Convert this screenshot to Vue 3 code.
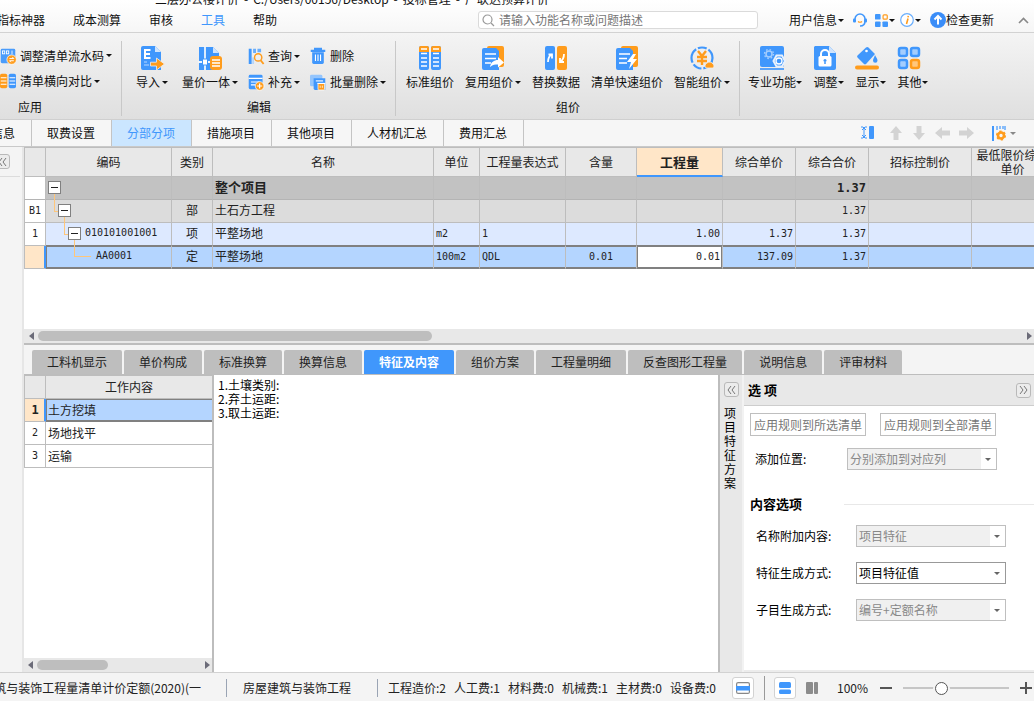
<script setup>
import { ref } from 'vue'

const B = '#4097fc'
const O = '#ff9c1c'

const icons = {
  serial: `<rect x="1" y="1" width="20" height="20" rx="2" fill="#4a9cfb"/><g fill="none" stroke="#fff" stroke-width="1.2"><rect x="3.5" y="4" width="3" height="4"/><rect x="9" y="4" width="3" height="4"/><path d="M16.500 3.500v5"/></g><circle cx="16" cy="16" r="6.500" fill="${O}" stroke="#fff"/><path d="M13 14.500h6l-2-2M19 17.500h-6l2 2" fill="none" stroke="#fff" stroke-width="1.300"/>`,
  compare: `<rect x="0" y="1" width="10" height="20" rx="2.500" fill="${O}"/><rect x="12" y="1" width="10" height="20" rx="2.500" fill="${B}"/><path d="M1 6.500h8M1 11h8M1 15.500h8M13 6.500h8M13 11h8M13 15.500h8" stroke="#fff" stroke-width="1.500"/>`,
  import: `<path d="M3 0h12l6 6v18H3a2 2 0 0 1-2-2V2a2 2 0 0 1 2-2z" fill="${B}"/><path d="M15 0l6 6h-6z" fill="#cfe4fd"/><path d="M10.500 4H5v8h5.500M5 8h5" fill="none" stroke="#fff" stroke-width="2"/><path d="M4 16h3M4 19h5" stroke="#8fc2ff" stroke-width="1.500"/><path d="M10.500 16.200h6v-4.200l8 6-8 6v-4h-6z" fill="${O}" stroke="#f0f0f0" stroke-width=".8"/>`,
  unify: `<path d="M1 1h14l6 6v17H1z" fill="${B}"/><path d="M15 1l6 6h-6z" fill="#cfe4fd"/><path d="M7 0v24M0 16h12" stroke="#eef5fd" stroke-width="1.800"/><rect x="4.500" y="13" width="5" height="6" fill="#fff" stroke="${B}"/><rect x="12" y="10" width="12" height="14" rx="3" fill="${O}"/><path d="M14 14h8M14 17h8M14 20h8" stroke="#fff" stroke-width="1.300"/>`,
  query: `<path d="M1 1h4v21H1z" fill="${B}"/><path d="M7 1h4v6H7zM13 1h5v5h-5z" fill="#6aaefc"/><circle cx="14" cy="13" r="5" fill="none" stroke="${O}" stroke-width="2"/><path d="M17.500 17l4 5" stroke="${O}" stroke-width="2.500"/><path d="M7 13v9" stroke="#a9d0ff" stroke-width="2"/>`,
  supply: `<rect x="1" y="1" width="19" height="20" rx="2" fill="${B}"/><path d="M1 6h19M4 11h12M4 15h6" stroke="#fff" stroke-width="1.600"/><circle cx="16" cy="16.500" r="6" fill="${O}" stroke="#fff"/><path d="M16 13v7M12.500 16.500h7" stroke="#fff" stroke-width="1.700"/>`,
  trash: `<path d="M1 4h20M7 3V1h8v2" fill="none" stroke="${B}" stroke-width="3"/><path d="M3 6h16v14a2 2 0 0 1-2 2H5a2 2 0 0 1-2-2z" fill="${B}"/><path d="M7.500 9v9M11 9v9M14.500 9v9" stroke="#fff" stroke-width="1.500"/>`,
  batch: `<rect x="0" y="1" width="17" height="16" rx="2" fill="#94c5fd"/><path d="M5 6h16v16H7a2 2 0 0 1-2-2z" fill="${B}"/><path d="M8 9.500h10" stroke="#fff" stroke-width="1.500"/><rect x="11" y="13" width="9" height="9" rx="1" fill="${O}" stroke="#fff"/><path d="M10 13h11" stroke="#fff" stroke-width="1.500"/><path d="M14 16v3M17 16v3" stroke="#fff"/>`,
  standard: `<rect x="1" y="0" width="10" height="24" rx="2" fill="${B}"/><rect x="13" y="0" width="10" height="24" rx="2" fill="${B}"/><path d="M1 6V2a2 2 0 0 1 2-2h6a2 2 0 0 1 2 2v4zM13 6V2a2 2 0 0 1 2-2h6a2 2 0 0 1 2 2v4z" fill="${O}"/><path d="M3 3h6M15 3h6M3 7.500h6M15 7.500h6M3 12h6M15 12h6M3 16h6M15 16h6M3 20h6M15 20h6" stroke="#fff" stroke-width="1.300"/>`,
  reuse: `<rect x="6" y="0" width="17" height="21" rx="2" fill="${O}"/><path d="M3 2h12l3 3v19H3a2 2 0 0 1-2-2V4a2 2 0 0 1 2-2z" fill="${B}"/><path d="M4 8h11M4 12.500h11M4 17h6" stroke="#fff" stroke-width="1.700"/><path d="M9 21c1-5 4-7 8-7v-3l6 5.500-6 5v-3c-3 0-5 0-8 2.500z" fill="#fff"/>`,
  replace: `<rect x="1" y="0" width="10" height="24" rx="2" fill="${B}"/><rect x="13" y="0" width="10" height="24" rx="2" fill="${O}"/><path d="M4 16c0-4 1-6 4-8M4.500 8.500H8v4M20 8c0 4-1 6-4 8M16 12v4h4" fill="none" stroke="#fff" stroke-width="1.800"/>`,
  quick: `<rect x="6" y="0" width="17" height="21" rx="2" fill="${O}"/><path d="M3 2h12l3 3v19H3a2 2 0 0 1-2-2V4a2 2 0 0 1 2-2z" fill="${B}"/><path d="M4 8h11M4 12.500h8M4 17h8" stroke="#fff" stroke-width="1.700"/><path d="M18 8l-6 8h4l-2 7 8-10h-4l3-5z" fill="#fff"/>`,
  smart: `<circle cx="12" cy="12" r="10.500" fill="none" stroke="${B}" stroke-width="2.200" stroke-dasharray="15 2 9 2"/><path d="M8 5l4 5 4-5M12 10v9M7 11h10M7 15h10" fill="none" stroke="${O}" stroke-width="2.400"/><path d="M16 22a3 3 0 0 1 1-5 4 4 0 0 1 6 1 2.500 2.500 0 0 1 0 4z" fill="${O}" stroke="#f0f0f0" stroke-width=".8"/>`,
  pro: `<rect x="0" y="0" width="24" height="21" rx="2" fill="${B}"/><path d="M0 23h24" stroke="${B}" stroke-width="1.700"/><circle cx="9" cy="8" r="3" fill="none" stroke="#a5cefe" stroke-width="1.500"/><circle cx="9" cy="8" r="4.500" fill="none" stroke="#a5cefe" stroke-width="1.300" stroke-dasharray="1.600 1.930"/><path d="M16.500 9.500h5.500l3 5.500-3 5.500h-5.500l-3-5.500z" fill="#4097fc" stroke="#e8f1fd" stroke-width="2"/><circle cx="19" cy="15" r="3" fill="${B}" stroke="#fff" stroke-width="1.300"/>`,
  adjust: `<path d="M2 0h14l7 7v15a2 2 0 0 1-2 2H3a2 2 0 0 1-2-2V1z" fill="${B}"/><path d="M16 0l7 7h-7z" fill="#cfe4fd"/><rect x="5.500" y="10" width="13" height="10.500" rx="1.500" fill="#fff"/><path d="M8 10V8a4 4 0 0 1 8 0v2" fill="none" stroke="#fff" stroke-width="2"/><path d="M12 13v5M10.500 14.500h3" stroke="${B}" stroke-width="1.500"/>`,
  display: `<path d="M2.500 9.500L11 1.500a2 2 0 0 1 2.500 0L20 8l-8.500 9.500a2 2 0 0 1-3 0L2.500 11.500a1.500 1.500 0 0 1 0-2z" fill="${B}"/><circle cx="11.500" cy="5" r="1.300" fill="#fff"/><path d="M20 9c1.500 3 2.500 4 2.500 5.500a2 2 0 0 1-4.500 0C18 13 19 12 20 9z" fill="${B}"/><path d="M2 21.500h20" stroke="${O}" stroke-width="4" stroke-linecap="round"/>`,
  other: `<g stroke-width="2.500"><rect x="2" y="2" width="8" height="8" rx="2" fill="#a3cdfe" stroke="${B}"/><rect x="14" y="2" width="8" height="8" rx="2" fill="#a3cdfe" stroke="${B}"/><rect x="2" y="14" width="8" height="8" rx="2" fill="#a3cdfe" stroke="${B}"/><rect x="14" y="14" width="8" height="8" rx="2" fill="#ffc77d" stroke="${O}"/></g>`
}

const titleParts = ['三层办公楼评价', '-', 'C:/Users/00156/Desktop', '-', '投标管理', '-', '广联达预算评价']
const menus = ['指标神器', '成本测算', '审核', '工具', '帮助']

const groups = [
  {
    title: '编辑', name: 'edit',
    big: [
      { icon: 'import', text: '导入', drop: true },
      { icon: 'unify', text: '量价一体', drop: true }
    ],
    small: [
      { icon: 'query', text: '查询', drop: true },
      { icon: 'trash', text: '删除' },
      { icon: 'supply', text: '补充', drop: true },
      { icon: 'batch', text: '批量删除', drop: true }
    ]
  },
  {
    title: '组价', name: 'price',
    big: [
      { icon: 'standard', text: '标准组价' },
      { icon: 'reuse', text: '复用组价', drop: true },
      { icon: 'replace', text: '替换数据' },
      { icon: 'quick', text: '清单快速组价' },
      { icon: 'smart', text: '智能组价', drop: true }
    ]
  },
  {
    title: '', name: 'more',
    big: [
      { icon: 'pro', text: '专业功能', drop: true },
      { icon: 'adjust', text: '调整', drop: true },
      { icon: 'display', text: '显示', drop: true },
      { icon: 'other', text: '其他', drop: true }
    ]
  }
]

const pageTabs = ['取费设置', '分部分项', '措施项目', '其他项目', '人材机汇总', '费用汇总']
const pageTab = ref('分部分项')

const columns = ['编码', '类别', '名称', '单位', '工程量表达式', '含量', '工程量', '综合单价', '综合合价', '招标控制价', '最低限价综合单价']

const rows = [
  { no: '', level: 0, open: true, cls: 'root', code: '', kind: '', name: '整个项目', unit: '', expr: '', content: '', qty: '', price: '', total: '1.37' },
  { no: 'B1', level: 1, open: true, cls: 'part', code: '', kind: '部', name: '土石方工程', unit: '', expr: '', content: '', qty: '', price: '', total: '1.37' },
  { no: '1', level: 2, open: true, cls: 'item', code: '010101001001', kind: '项', name: '平整场地', unit: 'm2', expr: '1', content: '', qty: '1.00', price: '1.37', total: '1.37' },
  { no: '', level: 3, open: false, cls: 'current', code: 'AA0001', kind: '定', name: '平整场地', unit: '100m2', expr: 'QDL', content: '0.01', qty: '0.01', price: '137.09', total: '1.37' }
]

const detailTabs = ['工料机显示', '单价构成', '标准换算', '换算信息', '特征及内容', '组价方案', '工程量明细', '反查图形工程量', '说明信息', '评审材料']
const detailTab = ref('特征及内容')
const works = ['土方挖填', '场地找平', '运输']
const feature = ref('1.土壤类别:\n2.弃土运距:\n3.取土运距:')

const options = [
  { id: 'name-extra', label: '名称附加内容:', value: '项目特征', disabled: true },
  { id: 'feature-mode', label: '特征生成方式:', value: '项目特征值', disabled: false },
  { id: 'child-mode', label: '子目生成方式:', value: '编号+定额名称', disabled: true }
]

const totals = ['工程造价:2', '人工费:1', '材料费:0', '机械费:1', '主材费:0', '设备费:0']
const zoom = ref(34)
</script>

<template>
  <div class="app">
    <header class="top">
      <div class="title"><span v-for="(p, i) in titleParts" :key="i">{{ p }}</span></div>
      <div class="menubar">
        <nav class="menus">
          <button v-for="m in menus" :key="m" :class="{ on: m === '工具' }">{{ m }}</button>
        </nav>
        <label class="search">
          <svg width="13" height="13" viewBox="0 0 13 13"><circle cx="5.500" cy="5.500" r="4.500" fill="none" stroke="#999" stroke-width="1.200" /><path d="M9 9l3 3" stroke="#999" stroke-width="1.200" /></svg>
          <input type="text" placeholder="请输入功能名称或问题描述" aria-label="搜索" />
        </label>
        <div class="account">
          <button>用户信息<i class="caret"></i></button>
          <button class="headset" aria-label="客服">
            <svg width="14" height="14" viewBox="0 0 14 14"><path d="M2 6a5 5 0 0 1 10 0M12 8c0 3-2 5-5 5" fill="none" stroke="#4097fc" stroke-width="1.500" /><rect x="0" y="5.500" width="3" height="4" rx="1" fill="#4097fc" /><rect x="11" y="5.500" width="3" height="4" rx="1" fill="#4097fc" /><path d="M5 8.500q2 1.500 4 0" fill="none" stroke="#ff9c1c" stroke-width="1.200" /></svg>
          </button>
          <button class="apps" aria-label="应用">
            <svg width="13" height="13" viewBox="0 0 14 14"><rect x="0" y="0" width="6" height="6" rx="1" fill="#4097fc" /><rect x="0" y="8" width="6" height="6" rx="1" fill="#4097fc" /><rect x="8" y="8" width="6" height="6" rx="1" fill="#4097fc" /><rect x="8.700" y="1" width="4.500" height="4.500" rx="1" fill="none" stroke="#ff9c1c" stroke-width="1.300" /></svg>
            <i class="caret"></i>
          </button>
          <button class="info" aria-label="信息">
            <svg width="14" height="14" viewBox="0 0 14 14"><circle cx="7" cy="7" r="6.300" fill="#fff" stroke="#6aaefc" stroke-width="1.200" /><path d="M8 5.500L6.500 11M8.300 2.800l-.3 1.500" stroke="#ff9c1c" stroke-width="1.600" /></svg>
            <i class="caret"></i>
          </button>
          <button class="update">
            <svg width="16" height="16" viewBox="0 0 16 16"><circle cx="8" cy="8" r="8" fill="#3a8df8" /><path d="M8 12.500V5M4.500 7.500L8 4l3.500 3.500" fill="none" stroke="#fff" stroke-width="2" /></svg>检查更新
          </button>
          <button class="fold" aria-label="收起">
            <svg width="11" height="7" viewBox="0 0 11 7"><path d="M1 6l4.500-4.500L10 6" fill="none" stroke="#888" stroke-width="1.600" /></svg>
          </button>
        </div>
      </div>
    </header>

    <section class="ribbon">
      <div class="group apply">
        <div class="tools stack">
          <button class="small"><svg class="ic16" viewBox="0 0 22 22" v-html="icons.serial"></svg>调整清单流水码<i class="caret"></i></button>
          <button class="small"><svg class="ic16" viewBox="0 0 22 22" v-html="icons.compare"></svg>清单横向对比<i class="caret"></i></button>
        </div>
        <div class="gname">应用</div>
      </div>
      <div v-for="g in groups" :key="g.name" class="group" :class="g.name">
        <div class="tools">
          <button v-for="b in g.big" :key="b.text" class="big">
            <svg class="ic24" viewBox="0 0 25 24" v-html="icons[b.icon]"></svg>
            <span>{{ b.text }}<i v-if="b.drop" class="caret"></i></span>
          </button>
          <div v-if="g.small" class="smalls">
            <button v-for="b in g.small" :key="b.text" class="small">
              <svg class="ic16" viewBox="0 0 22 22" v-html="icons[b.icon]"></svg>{{ b.text }}<i v-if="b.drop" class="caret"></i>
            </button>
          </div>
        </div>
        <div class="gname">{{ g.title }}</div>
      </div>
    </section>

    <nav class="pages">
      <button class="ptab first">信息</button>
      <button v-for="t in pageTabs" :key="t" class="ptab" :class="{ on: t === pageTab }" @click="pageTab = t">{{ t }}</button>
      <div class="ptools">
        <button aria-label="列宽"><svg width="14" height="14" viewBox="0 0 14 14"><rect x="8" y="0" width="5" height="13" rx="1" fill="#4097fc" /><path d="M0 1h2l1 1 1-1h2M0 12h2l1-1 1 1h2M3 2v9M1 4l2-2 2 2M1 9l2 2 2-2" fill="none" stroke="#4097fc" /></svg></button>
        <button aria-label="上移"><svg width="14" height="14" viewBox="0 0 14 14"><path d="M7 0l6 7H9.500v7h-5V7H1z" fill="#d3d3d3" /></svg></button>
        <button aria-label="下移"><svg width="14" height="14" viewBox="0 0 14 14"><path d="M7 14l6-7H9.500V0h-5v7H1z" fill="#d3d3d3" /></svg></button>
        <button aria-label="升级"><svg width="15" height="14" viewBox="0 0 15 14"><path d="M0 7l7-6v3.500h8v5H7V13z" fill="#d3d3d3" /></svg></button>
        <button aria-label="降级"><svg width="15" height="14" viewBox="0 0 15 14"><path d="M15 7L8 1v3.500H0v5h8V13z" fill="#d3d3d3" /></svg></button>
        <button class="setcol" aria-label="列设置">
          <svg width="14" height="15" viewBox="0 0 14 15"><path d="M1 0v15" stroke="#4097fc" stroke-width="2" /><path d="M5 0v4M8 0v3M11 0v3M13 0v4" stroke="#4097fc" stroke-width="1.200" /><circle cx="9" cy="9.500" r="3" fill="none" stroke="#ff9c1c" stroke-width="2.600" /><circle cx="9" cy="9.500" r="4.300" fill="none" stroke="#ff9c1c" stroke-width="1.500" stroke-dasharray="2.250 2.250" /></svg>
          <i class="caret dim"></i>
        </button>
      </div>
    </nav>

    <main class="body">
      <aside class="side"><div class="sidehead"><button class="chev" aria-label="展开">
        <svg width="9" height="8" viewBox="0 0 9 8"><path d="M4 0L1 4l3 4M8 0L5 4l3 4" fill="none" stroke="#777" /></svg>
      </button></div></aside>
      <div class="work">
        <section class="sheet">
          <table class="grid main">
            <colgroup>
              <col class="c0" /><col class="c1" /><col class="c2" /><col class="c3" /><col class="c4" /><col class="c5" />
              <col class="c6" /><col class="c7" /><col class="c8" /><col class="c9" /><col class="c10" /><col class="c11" />
            </colgroup>
            <thead>
              <tr><th></th><th v-for="c in columns" :key="c" :class="{ hot: c === '工程量' }">{{ c }}</th></tr>
            </thead>
            <tbody>
              <tr v-for="(r, i) in rows" :key="i" :class="r.cls">
                <td class="no num">{{ r.no }}</td>
                <td>
                  <div class="node" :class="'l' + r.level">
                    <button v-if="r.open" class="toggle" aria-label="折叠"></button>
                    <span class="num">{{ r.code }}</span>
                  </div>
                </td>
                <td class="mid">{{ r.kind }}</td>
                <td class="nm">{{ r.name }}</td>
                <td class="num">{{ r.unit }}</td>
                <td class="num">{{ r.expr }}</td>
                <td class="num mid">{{ r.content }}</td>
                <td class="num end qty">{{ r.qty }}</td>
                <td class="num end">{{ r.price }}</td>
                <td class="num end">{{ r.total }}</td>
                <td></td>
                <td></td>
              </tr>
            </tbody>
          </table>
          <div class="hbar wide"><i class="al"></i><div class="track"><div class="thumb"></div></div><i class="ar"></i></div>
        </section>

        <nav class="dtabs">
          <button v-for="t in detailTabs" :key="t" :class="{ on: t === detailTab }" @click="detailTab = t">{{ t }}</button>
        </nav>

        <section class="detail">
          <div class="jobs">
            <table class="grid">
              <colgroup><col class="c0" /><col /></colgroup>
              <thead><tr><th></th><th>工作内容</th></tr></thead>
              <tbody>
                <tr v-for="(w, i) in works" :key="w" :class="{ current: i === 0 }">
                  <td class="no num">{{ i + 1 }}</td><td>{{ w }}</td>
                </tr>
              </tbody>
            </table>
            <div class="hbar"><i class="al"></i><div class="track"><div class="thumb"></div></div><i class="ar"></i></div>
          </div>
          <textarea v-model="feature" class="feature" aria-label="项目特征" spellcheck="false"></textarea>
          <div class="strip">
            <button class="chev" aria-label="展开方案"><svg width="9" height="8" viewBox="0 0 9 8"><path d="M4 0L1 4l3 4M8 0L5 4l3 4" fill="none" stroke="#777" /></svg></button>
            <span>项目特征方案</span>
          </div>
          <div class="opts">
            <div class="ohead"><h2>选 项</h2><button class="chev" aria-label="收起选项"><svg width="9" height="8" viewBox="0 0 9 8"><path d="M1 0l3 4-3 4M5 0l3 4-3 4" fill="none" stroke="#777" /></svg></button></div>
            <div class="rules"><button>应用规则到所选清单</button><button>应用规则到全部清单</button></div>
            <div class="field pos">
              <label for="add-pos">添加位置:</label>
              <div class="pick"><select id="add-pos" disabled><option>分别添加到对应列</option></select></div>
            </div>
            <h3>内容选项</h3>
            <div v-for="o in options" :key="o.id" class="field">
              <label :for="o.id">{{ o.label }}</label>
              <div class="pick"><select :id="o.id" :disabled="o.disabled"><option>{{ o.value }}</option></select></div>
            </div>
          </div>
        </section>
      </div>
    </main>

    <footer class="status">
      <div class="std"><span>建筑与装饰工程量清单计价定额(2020)(一</span></div>
      <div class="major">房屋建筑与装饰工程</div>
      <div class="sums"><span v-for="t in totals" :key="t">{{ t }}</span></div>
      <button class="vbtn" aria-label="单栏"><svg width="14" height="12" viewBox="0 0 14 12"><rect x=".6" y=".6" width="12.800" height="10.800" rx="1.500" fill="#fff" stroke="#888" stroke-width="1.200" /><rect x="0" y="4" width="14" height="4.500" fill="#4097fc" /></svg></button>
      <i class="sep"></i>
      <button class="vbtn" aria-label="上下布局"><svg width="12" height="12" viewBox="0 0 12 12"><rect x="0" y="0" width="12" height="6" rx="1.500" fill="#4097fc" /><rect x="0" y="7.500" width="12" height="4.500" rx="1.500" fill="#4097fc" /></svg></button>
      <button class="cols" aria-label="左右布局"><svg width="12" height="12" viewBox="0 0 12 12"><rect x="0" y="0" width="7" height="12" rx="1" fill="#8c8c8c" /><rect x="8" y="0" width="4" height="12" rx="1" fill="#8c8c8c" /></svg></button>
      <span class="pct">100%</span>
      <button class="step" aria-label="缩小"><svg width="12" height="12" viewBox="0 0 12 12"><path d="M0 6h12" stroke="#555" stroke-width="2" /></svg></button>
      <input v-model="zoom" class="slider" type="range" min="0" max="100" aria-label="缩放" />
      <button class="step" aria-label="放大"><svg width="12" height="12" viewBox="0 0 12 12"><path d="M0 6h12M6 0v12" stroke="#555" stroke-width="2" /></svg></button>
    </footer>
  </div>
</template>

<style>
body { margin: 0; }
#app { height: 100vh; }
</style>

<style scoped>
.app {
  height: 100vh;
  display: flex;
  flex-direction: column;
  overflow: hidden;
  background: #f4f4f4;
  color: #111;
  font: 12px/16px "Noto Sans CJK SC", sans-serif;
}
.app * { box-sizing: border-box; }
button, input, select, textarea { font: inherit; color: inherit; margin: 0; }
button { background: none; border: 0; padding: 0; white-space: nowrap; cursor: default; }
svg { display: block; flex: none; overflow: visible; }
.caret {
  display: inline-block;
  flex: none;
  border: 3px solid transparent;
  border-top-color: #111;
  border-bottom: 0;
  vertical-align: middle;
}
.caret.dim { border-top-color: #888; }

.top { flex: none; background: linear-gradient(#fff, #f6f6f6); border-bottom: 1px solid #d2d2d2; }
.title { height: 8px; overflow: hidden; display: flex; align-items: flex-end; gap: 5px; padding: 0 0 1px 155px; white-space: nowrap; }
.menubar { height: 24px; display: flex; align-items: center; }
.menus { width: 481px; flex: none; display: flex; gap: 28px; margin-left: -3px; }
.menus .on { color: #4097fc; }
.search {
  width: 280px;
  height: 18px;
  flex: none;
  display: flex;
  align-items: center;
  gap: 4px;
  padding: 0 3px;
  border: 1px solid #dadada;
  border-radius: 3px;
  background: #fff;
}
.search input { flex: 1; min-width: 0; border: 0; outline: 0; background: none; padding: 0; height: 16px; }
.search input::placeholder { color: #777; }
.account { flex: 1; display: flex; align-items: center; padding: 0 5px 0 31px; }
.account button { display: flex; align-items: center; gap: 1px; }
.headset { margin-left: 9px; }
.apps { margin-left: 8px; }
.info { margin-left: 5px; }
.update { margin-left: 9px; }
.account .update { gap: 0; }
.fold { margin-left: auto; }

.ribbon { flex: none; display: flex; height: 87px; background: linear-gradient(#f4f4f4, #dfdfdf); border-bottom: 1px solid #cfcfcf; }
.group { display: flex; flex-direction: column; padding: 12px 0 0; position: relative; }
.group:not(.more)::after { content: ""; position: absolute; right: 0; top: 8px; bottom: 3px; width: 1px; background: #c8c8c8; }
.tools { display: flex; height: 47px; }
.gname { height: 24px; line-height: 24px; margin-top: 3px; text-align: center; }
.apply { width: 122px; }
.apply .gname { padding-right: 62px; }
.edit { width: 274px; }
.price { width: 344px; }
.edit .tools { padding-left: 14px; gap: 14px; }
.price .tools { padding-left: 10px; gap: 11px; }
.more .tools { padding-left: 8px; gap: 11px; }
.big { display: flex; flex-direction: column; align-items: center; height: 47px; gap: 3px; }
.big span { display: flex; align-items: center; gap: 2px; line-height: 18px; }
.more .big span { gap: 0; }
.more .ic24 { margin-right: 6px; }
.ic24 { width: 25px; height: 24px; margin-top: 1px; }
.ic16 { width: 16px; height: 16px; margin-right: 4px; }
.small { display: flex; align-items: center; height: 22px; text-align: left; }
.small .caret { margin-left: 2px; }
.stack { flex-direction: column; gap: 4px; }
.smalls { display: grid; grid-template-columns: auto auto; gap: 4px 10px; align-content: start; margin-left: -4px; }

.pages { flex: none; height: 27px; display: flex; border-bottom: 1px solid #c9c9c9; background: #f6f6f6; }
.ptab { padding: 0 16px 0 15px; border-right: 1px solid #c4c4c4; line-height: 26px; height: 26px; }
.ptab.first { width: 32px; display: flex; justify-content: flex-end; }
.ptab.on { background: #cbe6ff; color: #4097fc; }
.ptools { margin-left: auto; display: flex; align-items: center; gap: 9px; padding-right: 18px; }
.ptools button:first-child { margin-right: 5px; }
.setcol { display: flex; align-items: center; gap: 4px; margin-left: 9px; }

.body { flex: 1; min-height: 0; display: flex; }
.side { width: 24px; flex: none; border-right: 2px solid #e6e6e6; overflow: hidden; }
.sidehead { height: 30px; margin-right: 2px; border-bottom: 1px solid #dcdcdc; padding-top: 7px; }
.chev { width: 15px; height: 15px; flex: none; display: flex; align-items: center; justify-content: center; border: 1px solid #b9b9b9; border-radius: 3px; background: #ececec; }
.side .chev { margin-left: -5px; }
.work { flex: 1; min-width: 0; display: flex; flex-direction: column; }

.sheet { flex: none; height: 198px; display: flex; flex-direction: column; overflow: hidden; background: #fff; border-top: 1px solid #bdbdbd; border-bottom: 2px solid #bdbdbd; }
.grid { border-collapse: separate; border-spacing: 0; table-layout: fixed; color: #222; width: 100%; }
.grid.main { width: 1030px; flex: none; }
.c0 { width: 22px; } .c1 { width: 126px; } .c2 { width: 41px; } .c3 { width: 221px; } .c4 { width: 46px; } .c5 { width: 86px; }
.c6 { width: 71px; } .c7 { width: 86px; } .c8 { width: 73px; } .c9 { width: 73px; } .c10 { width: 103px; } .c11 { width: 82px; }
.grid th, .grid td { border: 0 solid #bdbdbd; border-width: 0 1px 1px 0; padding: 0 2px; white-space: nowrap; overflow: hidden; }
.grid th:first-child, .grid td:first-child { border-left-width: 1px; padding: 0; }
.grid th { font-weight: normal; background: #e8e8e8; height: 22px; line-height: 16px; }
.main th { height: 29px; line-height: 14px; white-space: normal; }
.grid th.hot { background: #ffe6c8; font-size: 13px; font-weight: bold; border-bottom: 2px solid #4097fc; }
.grid td { height: 23px; line-height: 16px; text-align: left; }
.grid.main td { padding-bottom: 2px; }
.grid.main td.num { padding-bottom: 0; }
.grid td.no { text-align: center; background: #fff; }
.grid td.mid { text-align: center; }
.grid td.end { text-align: right; }
.num { font-family: "DejaVu Sans Mono", "Noto Sans CJK SC", monospace; font-size: 10px; }
.root td { background: #c2c2c2; }
.root td { font-weight: bold; border-bottom-color: #b4b4b4; }
.root .nm { font-size: 13px; }
.root .num { font-size: 12px; }
.part td { background: #dcdcdc; }
.item td { background: #dde9ff; }
.item td:not(.no) { border-bottom-color: #808080; }
.grid .current td { background: #b4d5ff; }
.grid .current td:not(.no) { border-bottom-color: #808080; box-shadow: inset 0 1px #808080, inset 0 -1px #808080; }
.grid .current td:nth-child(2) { box-shadow: inset 1px 1px #808080, inset 0 -1px #808080; }
.grid .current td.no { background: #ffe6c8; box-shadow: inset -1px 0 #4097fc; border-right-color: #4097fc; font-weight: bold; }
.grid .current td.qty { background: #fff; box-shadow: inset 1px 1px #808080, inset -1px -1px #808080; }
.main td:nth-child(2) { overflow: visible; }
.node { position: relative; display: flex; align-items: center; height: 20px; gap: 4px; }
.l1 { margin-left: 10px; }
.l2 { margin-left: 20px; }
.l3 { margin-left: 48px; }
.l3::before { content: ""; position: absolute; left: -22px; top: 10px; width: 17px; height: 1px; background: #ffc67a; }
.toggle { position: relative; width: 13px; height: 13px; flex: none; border: 1px solid #808080; background: #fff; }
.toggle::before { content: ""; position: absolute; left: 2px; top: 5px; width: 7px; height: 1px; background: #222; }
.toggle::after { content: ""; position: absolute; left: 5px; top: 12px; width: 4px; height: 17px; border: solid #ffc67a; border-width: 0 0 1px 1px; }
.l2 .toggle::after { width: 1px; border-bottom: 0; }

.hbar { flex: none; margin-top: auto; height: 14px; display: flex; align-items: center; padding: 0 2px 0 4px; background: #e8e8e8; gap: 4px; }
.track { flex: 1; }
.thumb { height: 10px; border-radius: 5px; background: #bebebe; width: 43%; }
.wide { padding-left: 5px; }
.wide .thumb { width: 40%; }
.al, .ar { border: 4px solid transparent; }
.al { border-right: 5px solid #6b6b78; border-left: 0; }
.ar { border-left: 5px solid #6b6b78; border-right: 0; }

.dtabs { flex: none; height: 30px; display: flex; gap: 2px; padding: 5px 0 0 8px; border-bottom: 1px solid #bdbdbd; }
.dtabs button { height: 24px; padding: 0 15px; background: #bebebe; border-radius: 2px 2px 0 0; color: #222; }
.dtabs .on { background: #4097fc; color: #fff; font-weight: bold; }

.detail { flex: 1; min-height: 0; display: flex; background: #fff; }
.jobs { width: 190px; flex: none; display: flex; flex-direction: column; border-right: 2px solid #bdbdbd; }
.jobs .grid th:last-child, .jobs .grid td:last-child { border-right: 0; }
.jobs .grid .current td.no { font-size: 12px; }
.jobs .grid th { border-top: 1px solid #bdbdbd; height: 24px; }
.jobs .grid td { padding-bottom: 1px; }
.feature { flex: 1; min-width: 0; border: 0; outline: 0; resize: none; padding: 3px 4px; line-height: 14px; background: #fff; color: #000; }
.strip { width: 26px; flex: none; border-left: 2px solid #bdbdbd; border-right: 2px solid #f2f2f2; background: #e8e8e8; padding: 7px 4px 0; color: #000; }
.strip span { display: block; width: 13px; line-height: 14px; margin-top: 9px; white-space: normal; word-break: break-all; }
.opts { width: 290px; flex: none; color: #000; border-bottom: 2px solid #ececec; }
.ohead { height: 31px; display: flex; align-items: center; justify-content: space-between; padding: 0 3px 0 4px; background: #e8e8e8; border-bottom: 1px solid #cdcdcd; }
h2, h3 { margin: 0; font-size: 13px; line-height: 18px; font-weight: bold; }
.rules { display: flex; gap: 14px; padding: 7px 6px 0; }
.rules button { width: 116px; height: 23px; border: 1px solid #bfbfbf; background: #fff; color: #777; text-align: center; }
.field { display: flex; align-items: center; height: 22px; margin: 0 0 15px 12px; }
.field label { width: 100px; }
.pick { position: relative; width: 150px; height: 22px; }
.pick::after { content: ""; position: absolute; right: 6px; top: 10px; border: 3px solid transparent; border-top-color: #666; border-bottom: 0; pointer-events: none; }
.pick select { appearance: none; width: 150px; height: 22px; padding: 0 20px 0 2px; border: 1px solid #999; border-radius: 0; background: #fff; line-height: 20px; opacity: 1; }
.pick select:disabled { color: #888; border-color: #bfbfbf; background: linear-gradient(90deg, #f0f0f0 133px, #fff 133px); }
.field.pos { margin: 12px 0 0 11px; }
.pos label { width: 92px; }
h3 { display: flex; align-items: center; gap: 42px; margin: 25px 0 12px 6px; }
h3::after { content: ""; flex: 1; height: 1px; background: #e8e8e8; }

.status { flex: none; height: 29px; display: flex; align-items: center; border-top: 1px solid #d2d2d2; background: #f4f4f4; padding-top: 2px; color: #222; white-space: nowrap; }
.std { width: 227px; flex: none; display: flex; justify-content: flex-end; padding-right: 25px; border-right: 1px solid #9aa4b4; line-height: 18px; overflow: hidden; }
.major { width: 151px; flex: none; padding-left: 16px; border-right: 1px solid #9aa4b4; line-height: 18px; }
.sums { display: flex; gap: 8px; padding-left: 10px; width: 354px; flex: none; }
.vbtn { width: 22px; height: 22px; flex: none; display: flex; align-items: center; justify-content: center; border: 1px solid #d2d2d2; border-radius: 3px; background: #fff; }
.sep { width: 1px; height: 24px; margin: 0 9px 0 10px; background: #999; }
.cols { margin-left: 10px; }
.pct { margin-left: 19px; width: 43px; }
.slider { appearance: none; flex: 1; min-width: 0; height: 14px; margin: 0 11px; background: linear-gradient(#c6c6c6, #c6c6c6) center / 100% 2px no-repeat; }
.slider::-webkit-slider-thumb { appearance: none; width: 13px; height: 13px; border: 1px solid #555; border-radius: 50%; background: #fff; box-shadow: 0 0 0 2px #f4f4f4; }
.status > .step:last-child { margin-right: 2px; }
</style>
